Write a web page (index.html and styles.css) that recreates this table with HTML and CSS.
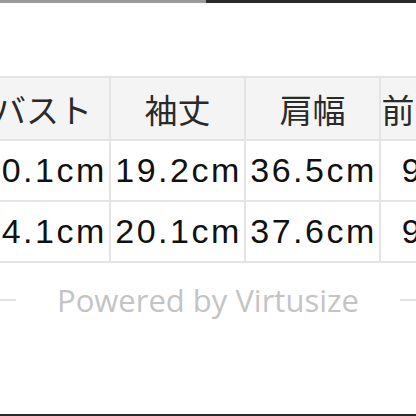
FILE: index.html
```html
<!DOCTYPE html>
<html lang="ja">
<head>
<meta charset="utf-8">
<link rel="stylesheet" href="styles.css">
</head>
<body>
<div class="tabs"><div class="tab tab-a"></div><div class="tab tab-b"></div></div>
<div class="table-wrap">
  <table class="size-table">
    <tr>
      <th>バスト</th><th>袖丈</th><th>肩幅</th><th class="wide">前中心着丈</th>
    </tr>
    <tr>
      <td>50.1cm</td><td>19.2cm</td><td>36.5cm</td><td class="wide">96.5cm</td>
    </tr>
    <tr>
      <td>54.1cm</td><td>20.1cm</td><td>37.6cm</td><td class="wide">98.0cm</td>
    </tr>
  </table>
</div>
<div class="powered">
  <span class="line"></span>
  <span class="powered-text">Powered by Virtusize</span>
  <span class="line"></span>
</div>
<div class="bottom-bar"></div>
</body>
</html>
```
FILE: styles.css
```css
html, body {
  margin: 0;
  padding: 0;
  background: #ffffff;
}
body {
  width: 416px;
  height: 416px;
  overflow: hidden;
  display: flex;
  flex-direction: column;
}
.tabs {
  display: flex;
  height: 3px;
}
.tab-a {
  width: 206px;
  background: #9a9a9a;
}
.tab-b {
  flex: 1;
  background: #2b2b2b;
}
.table-wrap {
  margin-top: 73px;
  overflow: hidden;
  width: 416px;
}
.size-table {
  margin-left: -26px;
  border-collapse: collapse;
  table-layout: fixed;
  width: 573px;
}
.size-table th,
.size-table td {
  width: 133px;
  border: 2px solid #e4e4e4;
  padding: 0;
  text-align: center;
  white-space: nowrap;
  overflow: visible;
}
.size-table .wide {
  width: 166px;
}
.size-table th {
  height: 61px;
  background: #f4f4f4;
  font-family: "Noto Sans CJK JP", sans-serif;
  font-weight: 400;
  font-size: 33px;
  color: #2a2a2a;
}
.size-table td {
  height: 59px;
  background: #ffffff;
  font-family: "Liberation Sans", "Noto Sans CJK JP", sans-serif;
  font-size: 34px;
  letter-spacing: 2.5px;
  text-indent: 2px;
  color: #111111;
}
.powered {
  display: flex;
  align-items: center;
  margin-top: 20px;
  height: 34px;
}
.line {
  width: 16px;
  height: 2px;
  background: #e2e2e2;
}
.powered-text {
  flex: 1;
  text-align: center;
  font-family: "Open Sans", sans-serif;
  font-size: 31px;
  color: #c4c4c4;
}
.bottom-bar {
  margin-top: auto;
  height: 2px;
  background: #2b2b2b;
}
```
